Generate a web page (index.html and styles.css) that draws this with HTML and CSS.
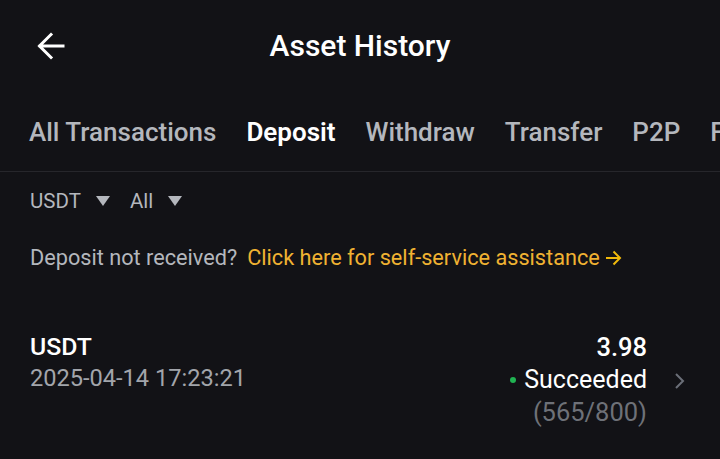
FILE: index.html
```html
<!DOCTYPE html>
<html>
<head>
<meta charset="utf-8">
<link rel="stylesheet" href="styles.css">
</head>
<body>
<div class="page">
  <header class="topbar">
    <div class="back">
      <svg width="30" height="30" viewBox="0 0 30 30"><path d="M27 15H4M15 3.5L3.5 15L15 26.5" fill="none" stroke="#fff" stroke-width="3" stroke-linecap="square"/></svg>
    </div>
    <h1 class="title">Asset History</h1>
    <div></div>
  </header>
  <nav class="tabs">
    <div class="tab">All Transactions</div>
    <div class="tab active">Deposit</div>
    <div class="tab">Withdraw</div>
    <div class="tab">Transfer</div>
    <div class="tab">P2P</div>
    <div class="tab">Fiat</div>
  </nav>
  <div class="filters">
    <span class="filter">USDT <span class="tri"></span></span>
    <span class="filter">All <span class="tri"></span></span>
  </div>
  <div class="notice">
    <span class="muted">Deposit not received?</span>
    <span class="link">Click here for self-service assistance<svg class="arrow" width="18" height="18" viewBox="0 0 18 18"><path d="M2 9H16M9.5 2.5L16 9L9.5 15.5" fill="none" stroke="#f0b90b" stroke-width="2"/></svg></span>
  </div>
  <div class="record">
    <div class="left">
      <div class="coin">USDT</div>
      <div class="date">2025-04-14 17:23:21</div>
    </div>
    <div class="right">
      <div class="amount">3.98</div>
      <div class="status"><span class="dot"></span>Succeeded</div>
      <div class="conf">(565/800)</div>
    </div>
    <div class="chev">
      <svg width="12" height="18" viewBox="0 0 12 18"><path d="M3 2L10 9L3 16" fill="none" stroke="#6b6f78" stroke-width="2"/></svg>
    </div>
  </div>
</div>
</body>
</html>
```
FILE: styles.css
```css
html, body {
  margin: 0;
  padding: 0;
  background: #121216;
}
.page {
  width: 720px;
  height: 459px;
  overflow: hidden;
  font-family: Roboto, "Noto Sans", sans-serif;
  color: #fff;
}
.topbar {
  height: 92px;
  display: grid;
  grid-template-columns: 1fr auto 1fr;
  align-items: center;
}
.back {
  padding-left: 36px;
  display: flex;
  align-items: center;
}
.title {
  margin: 0;
  font-size: 30px;
  font-weight: 500;
  line-height: 36px;
}
.tabs {
  height: 79px;
  border-bottom: 1px solid #26262b;
  display: flex;
  gap: 22px;
  padding-left: 25px;
  overflow: hidden;
  white-space: nowrap;
}
.tab {
  padding: 25px 4px 0;
  font-size: 26px;
  font-weight: 500;
  line-height: 30px;
  color: #b4b7bd;
  height: 54px;
  border-bottom: 4px solid transparent;
  flex: none;
}
.tab.active {
  color: #fff;
  font-weight: 600;
  border-bottom-color: #e9b23c;
}
.filters {
  display: flex;
  gap: 20px;
  padding: 17px 0 0 30px;
  height: 24px;
  line-height: 24px;
  font-size: 20.5px;
  color: #b4b7bd;
}
.filter {
  display: flex;
  align-items: center;
  gap: 15px;
}
.tri {
  width: 0;
  height: 0;
  border-left: 7px solid transparent;
  border-right: 7px solid transparent;
  border-top: 10px solid #b4b7bd;
}
.notice {
  padding: 33px 0 0 30px;
  height: 24px;
  line-height: 24px;
  font-size: 21.7px;
  display: flex;
  gap: 10px;
  white-space: nowrap;
}
.muted { color: #b4b7bd; }
.link {
  color: #f0b232;
  display: flex;
  align-items: center;
  gap: 4px;
}
.record {
  display: flex;
  padding: 62px 0 0 30px;
}
.left { flex: 1; }
.coin {
  font-size: 24.8px;
  font-weight: 500;
  line-height: 30px;
}
.date {
  font-size: 23.6px;
  line-height: 32px;
  color: #a2a5ab;
}
.right {
  display: flex;
  flex-direction: column;
  align-items: flex-end;
}
.amount {
  font-size: 25.5px;
  font-weight: 500;
  line-height: 30px;
}
.status {
  display: flex;
  align-items: center;
  font-size: 25px;
  line-height: 36px;
  gap: 8px;
}
.dot {
  width: 6px;
  height: 6px;
  border-radius: 50%;
  background: #20b352;
}
.conf {
  font-size: 25.5px;
  line-height: 28px;
  color: #6e7178;
}
.chev {
  width: 73px;
  display: flex;
  justify-content: flex-start;
  padding-left: 26px;
  box-sizing: border-box;
  padding-top: 40px;
}
```
